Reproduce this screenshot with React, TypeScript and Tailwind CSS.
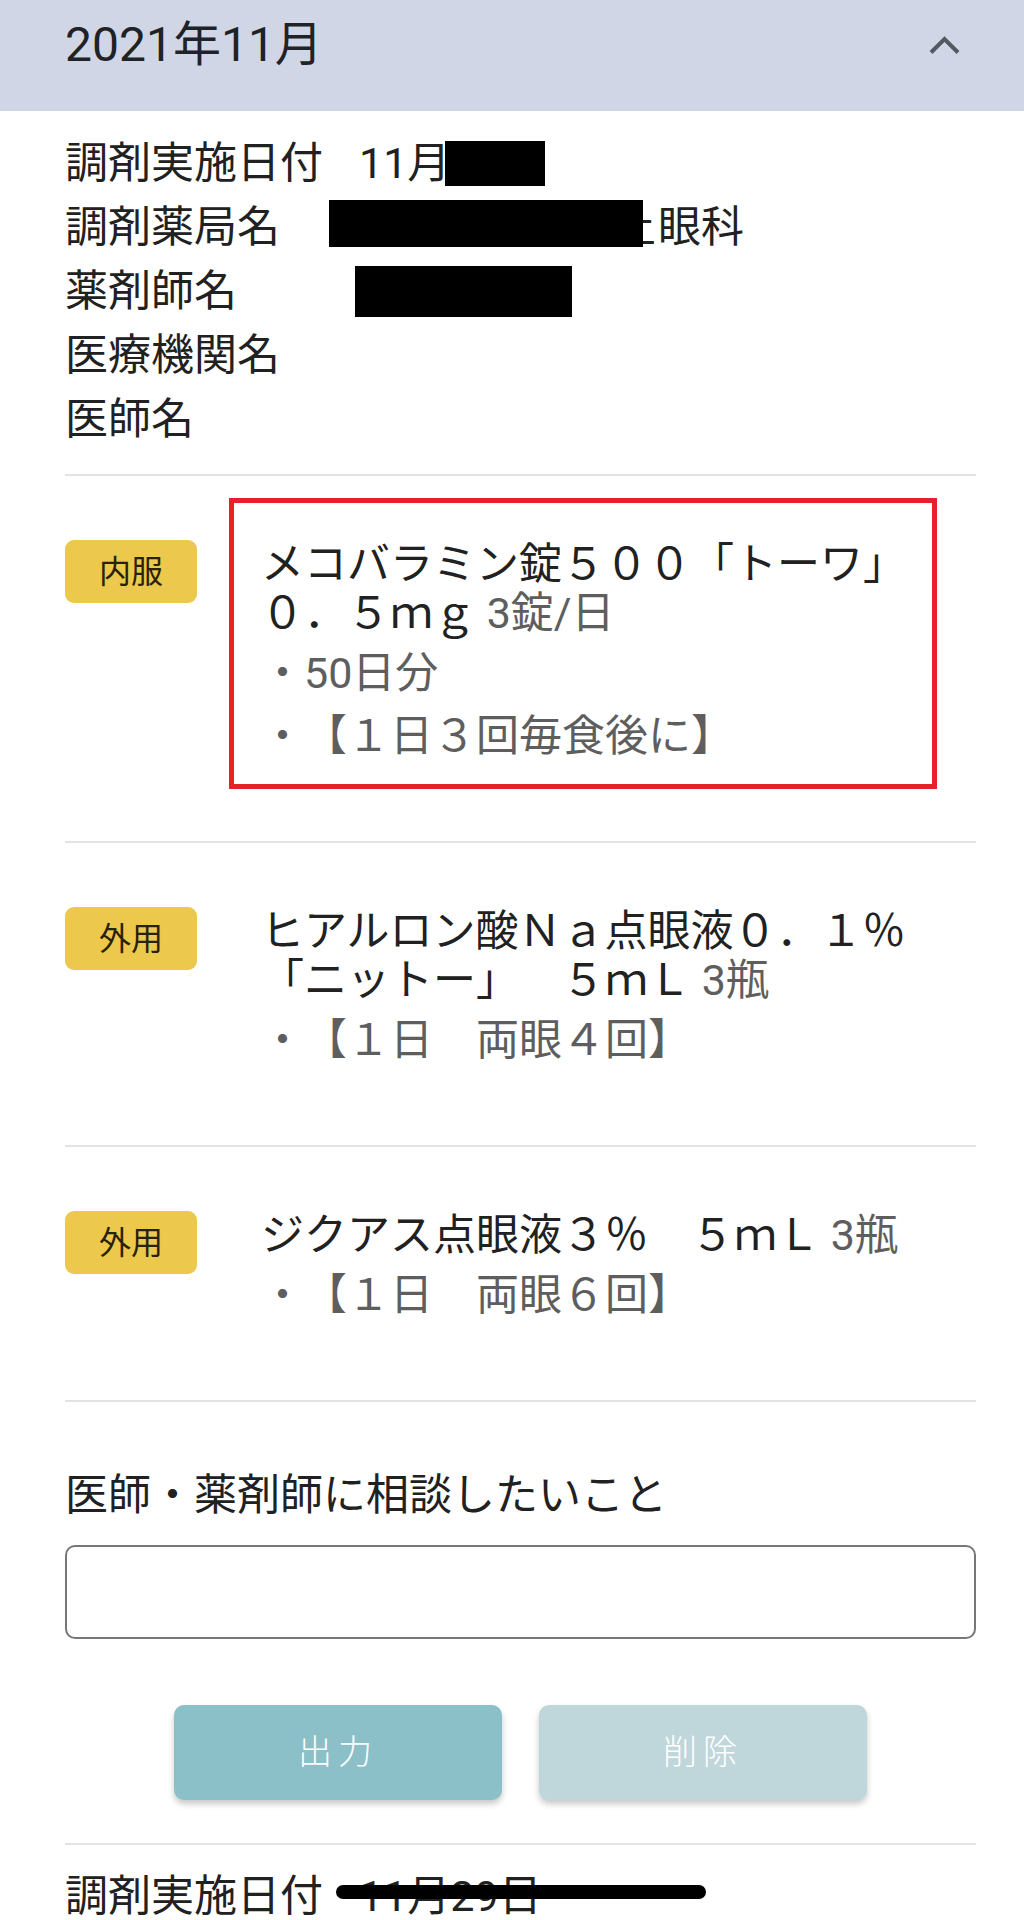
import React from "react";

const font = { fontFamily: 'Roboto, "Noto Sans CJK JP", sans-serif' };

type Drug = {
  kind: string;
  name: string[];
  qty: string;
  notes: string[];
  highlight?: boolean;
};

const drugs: Drug[] = [
  {
    kind: "内服",
    name: ["メコバラミン錠５００「トーワ」", "０．５ｍｇ"],
    qty: "3錠/日",
    notes: ["・50日分", "・【１日３回毎食後に】"],
    highlight: true,
  },
  {
    kind: "外用",
    name: ["ヒアルロン酸Ｎａ点眼液０．１％", "「ニットー」　５ｍＬ"],
    qty: "3瓶",
    notes: ["・【１日　両眼４回】"],
  },
  {
    kind: "外用",
    name: ["ジクアス点眼液３％　５ｍＬ"],
    qty: "3瓶",
    notes: ["・【１日　両眼６回】"],
  },
];

function Divider() {
  return <div className="h-[2px] bg-[#e3e3e3]" />;
}

function Redact({ className }: { className: string }) {
  return <span className={`absolute bg-black ${className}`} />;
}

function DrugItem({ drug }: { drug: Drug }) {
  return (
    <div className="relative flex items-start pt-[64px] pb-[73px]">
      <div className="w-[132px] h-[63px] shrink-0 rounded-[9px] bg-[#ecc94c] flex items-center justify-center text-[32px] text-[#2a2208]">
        {drug.kind}
      </div>
      <div className="ml-[64px] text-[43px] text-[#212121]">
        {drug.name.map((line, i) => (
          <div key={i} className="leading-[49px] whitespace-nowrap">
            {line}
            {i === drug.name.length - 1 && (
              <span className="text-[#5e5e5e]"> {drug.qty}</span>
            )}
          </div>
        ))}
        <div className="mt-[4px] text-[#5e5e5e]">
          {drug.notes.map((n) => (
            <div key={n} className="leading-[63px] whitespace-nowrap">
              {n}
            </div>
          ))}
        </div>
      </div>
      {drug.highlight && (
        <div className="absolute left-[164px] top-[22px] w-[708px] h-[291px] border-[5px] border-[#e5212c]" />
      )}
    </div>
  );
}

export default function App() {
  return (
    <div
      className="relative w-[1024px] h-[1920px] overflow-hidden bg-white [text-spacing-trim:space-all]"
      style={font}
    >
      {/* month header */}
      <div className="h-[111px] bg-[#d1d6e7] pt-[10px] pl-[65px] pr-[64px] flex items-start justify-between">
        <span className="text-[48px] leading-[70px] text-[#1f2226]">2021年11月</span>
        <svg width="31" height="19" viewBox="0 0 31 19" className="mt-[26px]">
          <path d="M2 16.5 L15.5 3 L29 16.5" fill="none" stroke="#535861" strokeWidth="4" />
        </svg>
      </div>

      <div className="pl-[65px] pr-[48px]">
        {/* dispensing info */}
        <div className="pt-[20px] pb-[23px] text-[43px] leading-[64px] text-[#212121]">
          <div className="relative flex">
            <span>調剤実施日付</span>
            <span className="ml-[36px]">11月</span>
            <Redact className="left-[380px] top-[10px] w-[100px] h-[45px]" />
          </div>
          <div className="relative flex">
            <span>調剤薬局名</span>
            <span className="ml-[363px] inline-block w-[13px] overflow-hidden">
              <span className="inline-block -ml-[30px]">土</span>
            </span>
            <span className="ml-[2px]">眼科</span>
            <Redact className="left-[264px] top-[5px] w-[314px] h-[47px]" />
          </div>
          <div className="relative">
            <span>薬剤師名</span>
            <Redact className="left-[290px] top-[7px] w-[217px] h-[51px]" />
          </div>
          <div>医療機関名</div>
          <div>医師名</div>
        </div>

        <Divider />
        {drugs.map((d, i) => (
          <React.Fragment key={i}>
            <DrugItem drug={d} />
            <Divider />
          </React.Fragment>
        ))}

        {/* consultation */}
        <div className="pt-[61px] pb-[43px]">
          <div className="text-[43px] leading-[64px] text-[#212121]">医師・薬剤師に相談したいこと</div>
          <textarea className="mt-[18px] block w-full h-[94px] rounded-[10px] border-2 border-[#777777] resize-none outline-none" />
          <div className="mt-[66px] flex justify-center gap-[37px]">
            <button className="w-[328px] h-[95px] rounded-[10px] bg-[#8bc0c8] text-white text-[34px] tracking-[6px] font-light shadow-[0_4px_6px_rgba(0,0,0,0.22)]">
              出力
            </button>
            <button className="w-[328px] h-[95px] rounded-[10px] bg-[#bfd7db] text-white text-[34px] tracking-[6px] font-light shadow-[0_4px_6px_rgba(0,0,0,0.22)]">
              削除
            </button>
          </div>
        </div>

        <Divider />
        <div className="pt-[19px] text-[43px] leading-[64px] text-[#212121] flex">
          <span>調剤実施日付</span>
          <span className="ml-[36px]">11月29日</span>
        </div>
      </div>

      {/* system gesture bar */}
      <div className="absolute left-[336px] top-[1885px] w-[370px] h-[14px] rounded-full bg-black" />
    </div>
  );
}
